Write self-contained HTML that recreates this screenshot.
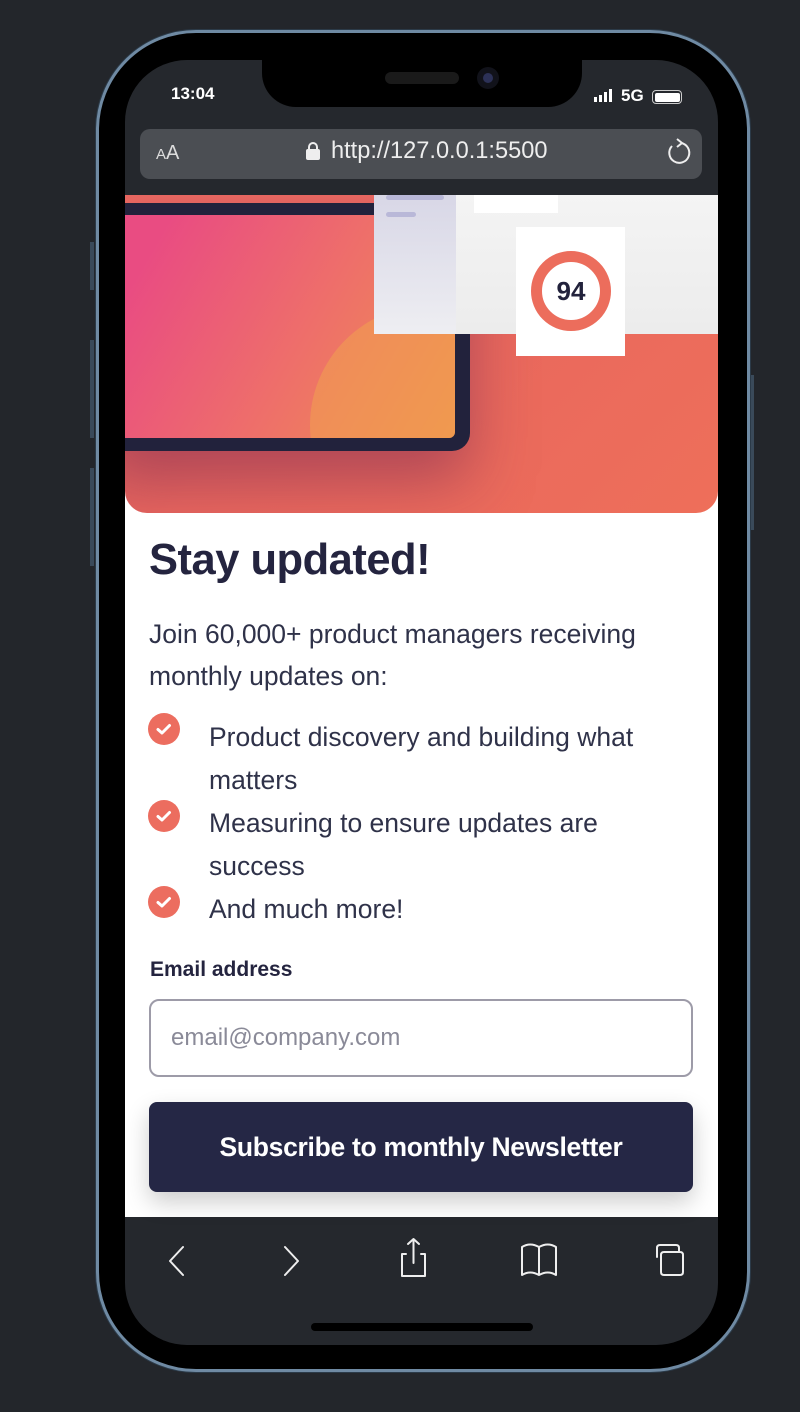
<!DOCTYPE html>
<html><head><meta charset="utf-8"><style>
*{margin:0;padding:0;box-sizing:border-box}
body{width:800px;height:1412px;background:#23262b;position:relative;overflow:hidden;font-family:"Liberation Sans",Arial,sans-serif}
.frame{position:absolute;left:96px;top:30px;width:654px;height:1342px;border-radius:100px;border:3px solid #6f8aa3;background:#000;box-shadow:0 0 0 1px #2b3a48}
.screen{position:absolute;left:125px;top:60px;width:593px;height:1285px;border-radius:62px;background:#25282d;overflow:hidden}
.btn{position:absolute;background:#3a4a5a;width:4px}
.abs{position:absolute}
.t{color:#2f3249}
</style></head><body>
<div class="btn" style="left:90px;top:242px;height:48px"></div>
<div class="btn" style="left:90px;top:340px;height:98px"></div>
<div class="btn" style="left:90px;top:468px;height:98px"></div>
<div class="btn" style="left:750px;top:375px;height:155px"></div>
<div class="frame"></div>
<div class="screen">
  <div class="abs" style="left:137px;top:-10px;width:320px;height:57px;background:#000;border-radius:0 0 34px 34px"></div>
  <div class="abs" style="left:260px;top:12px;width:74px;height:12px;background:#1a1a1a;border-radius:6px"></div>
  <div class="abs" style="left:352px;top:7px;width:22px;height:22px;background:#11121a;border-radius:50%"><div style="margin:6px;width:10px;height:10px;border-radius:50%;background:#2c3157"></div></div>
  <div class="abs" style="left:46px;top:24px;color:#fff;font-size:17px;font-weight:bold">13:04</div>
  <div class="abs" style="left:469px;top:28px;width:20px;height:14px">
    <div class="abs" style="left:0;bottom:0;width:3px;height:5px;background:#fff"></div>
    <div class="abs" style="left:5px;bottom:0;width:3px;height:7px;background:#fff"></div>
    <div class="abs" style="left:10px;bottom:0;width:3px;height:10px;background:#fff"></div>
    <div class="abs" style="left:15px;bottom:0;width:3px;height:13px;background:#fff"></div>
  </div>
  <div class="abs" style="left:496px;top:26px;color:#fff;font-size:17px;font-weight:bold">5G</div>
  <div class="abs" style="left:527px;top:30px;width:30px;height:14px;border:1.5px solid #ccc;border-radius:4px;padding:1.5px"><div style="width:100%;height:100%;background:#fff;border-radius:2px"></div></div>
  <div class="abs" style="left:15px;top:69px;width:562px;height:50px;background:#4b4e53;border-radius:10px"></div>
  <div class="abs" style="left:31px;top:82px;color:#ddd;font-size:20px"><span style="font-size:15px">A</span>A</div>
  <div class="abs" style="left:181px;top:82px;width:14px;height:18px">
    <div class="abs" style="left:2px;top:0;width:10px;height:10px;border:2px solid #eee;border-radius:5px 5px 0 0"></div>
    <div class="abs" style="left:0;top:7px;width:14px;height:11px;background:#eee;border-radius:2px"></div>
  </div>
  <div class="abs" style="left:206px;top:78px;color:#eee;font-size:23.6px">http://127.0.0.1:5500</div>
  <svg class="abs" style="left:539px;top:77px" width="28" height="32" viewBox="0 0 28 32"><path d="M17 6 A10 10 0 1 1 8 9" fill="none" stroke="#eee" stroke-width="2"/><path d="M13 2 L18 6 L13 10" fill="none" stroke="#eee" stroke-width="2"/></svg>
  <div class="abs" style="left:0;top:135px;width:593px;height:1022px;background:#fff">
    <div class="abs" style="left:0;top:0;width:593px;height:318px;border-radius:0 0 22px 22px;overflow:hidden;background:linear-gradient(135deg,#d65a5f 0%,#e8665e 40%,#ee6f5a 100%)">
      <div class="abs" style="left:0;top:0;width:593px;height:8px;background:#ec6a62"></div>
      <div class="abs" style="left:-20px;top:8px;width:365px;height:248px;background:#22223c;border-radius:0 0 18px 0;box-shadow:0 30px 60px rgba(120,40,80,.5)"></div>
      <div class="abs" style="left:0;top:20px;width:330px;height:223px;background:linear-gradient(120deg,#e94c82 10%,#ee6f6a 55%,#f0924e 100%);border-radius:0 0 6px 0;overflow:hidden">
        <div class="abs" style="left:185px;top:90px;width:240px;height:240px;border-radius:50%;background:rgba(240,160,80,.55)"></div>
      </div>
      <div class="abs" style="left:249px;top:-5px;width:350px;height:144px;background:linear-gradient(#f4f4f4,#ececec);border-radius:0 0 0 6px"></div>
      <div class="abs" style="left:249px;top:-5px;width:82px;height:144px;background:linear-gradient(#d7d6e6,#eeeef2)"></div>
      <div class="abs" style="left:261px;top:0;width:58px;height:5px;background:#b9b8d8;border-radius:3px"></div>
      <div class="abs" style="left:261px;top:17px;width:30px;height:5px;background:#b9b8d8;border-radius:3px"></div>
      <div class="abs" style="left:349px;top:0;width:84px;height:18px;background:#fff"></div>
      <div class="abs" style="left:391px;top:32px;width:109px;height:129px;background:#fff"></div>
      <div class="abs" style="left:406px;top:56px;width:80px;height:80px;border-radius:50%;border:11px solid #ec6d5c;background:#fff;text-align:center;line-height:58px;font-size:26px;font-weight:bold;color:#22223c">94</div>
    </div>
    <div class="abs t" style="left:24px;top:341px;font-size:43.5px;font-weight:bold;color:#24243f;letter-spacing:-0.5px;white-space:nowrap">Stay updated!</div>
    <div class="abs t" style="left:24px;top:418px;width:540px;font-size:26.5px;line-height:42px">Join 60,000+ product managers receiving<br>monthly updates on:</div>
    <div class="abs" style="left:23px;top:518px;width:32px;height:32px;border-radius:50%;background:#ec6d5f"><svg width="32" height="32"><path d="M10 16.5 L14 20 L21.5 12.5" fill="none" stroke="#fff" stroke-width="3" stroke-linecap="round" stroke-linejoin="round"/></svg></div>
    <div class="abs" style="left:23px;top:605px;width:32px;height:32px;border-radius:50%;background:#ec6d5f"><svg width="32" height="32"><path d="M10 16.5 L14 20 L21.5 12.5" fill="none" stroke="#fff" stroke-width="3" stroke-linecap="round" stroke-linejoin="round"/></svg></div>
    <div class="abs" style="left:23px;top:691px;width:32px;height:32px;border-radius:50%;background:#ec6d5f"><svg width="32" height="32"><path d="M10 16.5 L14 20 L21.5 12.5" fill="none" stroke="#fff" stroke-width="3" stroke-linecap="round" stroke-linejoin="round"/></svg></div>
    <div class="abs t" style="left:84px;top:521px;white-space:nowrap;font-size:26.5px;line-height:43px">Product discovery and building what<br>matters</div>
    <div class="abs t" style="left:84px;top:607px;white-space:nowrap;font-size:26.5px;line-height:43px">Measuring to ensure updates are<br>success</div>
    <div class="abs t" style="left:84px;top:693px;white-space:nowrap;font-size:26.5px;line-height:43px">And much more!</div>
    <div class="abs" style="left:25px;top:763px;font-size:21px;font-weight:bold;color:#24243f">Email address</div>
    <div class="abs" style="left:24px;top:804px;width:544px;height:78px;border:2px solid #9d9ba8;border-radius:10px;padding-left:20px;line-height:74px;font-size:24px;color:#8a8a98">email@company.com</div>
    <div class="abs" style="left:24px;top:907px;width:544px;height:90px;background:#252745;border-radius:8px;box-shadow:0 10px 24px rgba(0,0,0,.2);color:#fff;text-align:center;line-height:90px;font-size:26.5px;font-weight:bold;letter-spacing:-0.3px;white-space:nowrap">Subscribe to monthly Newsletter</div>
  </div>
  <svg class="abs" style="left:0;top:1157px" width="593" height="128" viewBox="0 0 593 128">
    <g fill="none" stroke="#eee" stroke-width="2" stroke-linecap="round" stroke-linejoin="round">
      <path d="M58 30 L45 44 L58 58"/>
      <path d="M160 30 L173 44 L160 58"/>
      <path d="M281 37 H277 V59 H300 V37 H296 M288.5 22 V46 M283 27 L288.5 22 L294 27"/>
      <path d="M397 58 V30 Q405 25 414 30 Q423 25 431 30 V58 Q423 53 414 58 Q405 53 397 58 Z M414 30 V58"/>
      <path d="M532 40 V31 Q532 28 535 28 H551 Q554 28 554 31 V35 M539 35 H555 Q558 35 558 38 V55 Q558 58 555 58 H539 Q536 58 536 55 V38 Q536 35 539 35 Z"/>
    </g>
    <rect x="186" y="106" width="222" height="8" rx="4" fill="#000"/>
  </svg>
</div>
</body></html>
